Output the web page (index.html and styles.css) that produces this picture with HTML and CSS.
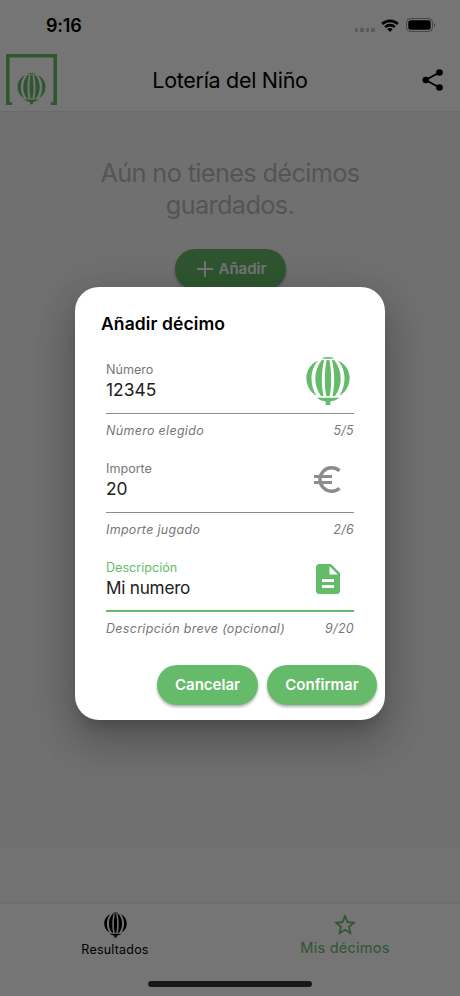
FILE: index.html
```html
<!DOCTYPE html>
<html lang="es">
<head>
<meta charset="utf-8">
<meta name="viewport" content="width=device-width, initial-scale=1">
<title>Lotería del Niño</title>
<link rel="stylesheet" href="styles.css">
</head>
<body>
<svg class="defs" width="0" height="0" aria-hidden="true">
  <symbol id="balloon" viewBox="0 0 44 50">
    <path d="M16 1.9Q22 .1 28 1.9L27 2.7H17ZM20.600 4H23.400C25.700 15 25.700 30 23.700 40H20.300C18.300 30 18.300 15 20.600 4ZM15.600 4.300L18.200 4C15.200 15 15.200 30 17.500 40H15C7.300 30 7.300 15 15.600 4.300ZM28.400 4.300L25.800 4C28.800 15 28.800 30 26.500 40H29C36.700 30 36.700 15 28.400 4.300ZM12 4.400C3.600 14 3.600 29 10.400 39.600L8.500 38.600C-2.600 30-3.200 11.500 12 4.400ZM32 4.400C40.400 14 40.400 29 33.600 39.600L35.500 38.600C46.600 30 47.200 11.500 32 4.400ZM10.300 41.700H33.700C30 44.200 27 45 24.300 45.400V49H19.700V45.400C17 45 14 44.200 10.300 41.700Z"/>
  </symbol>
</svg>
<div class="phone">
  <div class="app">
    <header class="top">
      <div class="status">
        <span class="clock">9:16</span>
        <div class="signals">
          <span class="dots"><i></i><i></i><i></i><i></i></span>
          <svg class="wifi" viewBox="0 0 18 14"><path d="M9 14L6.300 11.300A3.900 3.900 0 0 1 11.700 11.300ZM5 10L3.200 8.200A8.300 8.300 0 0 1 14.800 8.200L13 10A5.800 5.800 0 0 0 5 10ZM2 7L.2 5.100A12.600 12.600 0 0 1 17.800 5.100L16 7A10 10 0 0 0 2 7Z"/></svg>
          <svg class="battery" viewBox="0 0 30 14"><rect x=".5" y=".5" width="26" height="13" rx="4" fill="none" stroke="#000" stroke-opacity=".4"/><rect x="2.300" y="2.300" width="22.400" height="9.400" rx="2.300"/><path d="M28 5V9C29.700 8.300 29.700 5.700 28 5Z" fill-opacity=".45"/></svg>
        </div>
      </div>
      <div class="bar">
        <svg class="logo" viewBox="0 0 50 50"><path d="M0 0H50V50H44V47.300H46.500V3.500H3.500V47.300H6V50H0Z"/><use href="#balloon" x="11" y="18" width="28" height="32"/></svg>
        <h1>Lotería del Niño</h1>
        <svg class="share" viewBox="0 0 22 22"><path d="M17.500 3.500L3.500 11L17.500 18.500" fill="none" stroke="#000" stroke-width="1.900"/><circle cx="17.500" cy="3.500" r="3.300"/><circle cx="3.800" cy="11" r="3.300"/><circle cx="17.500" cy="18.500" r="3.300"/></svg>
      </div>
    </header>
    <main class="content">
      <p class="empty"><span>Aún no tienes décimos</span><br><span>guardados.</span></p>
      <button class="pill add"><svg viewBox="0 0 16 16"><path d="M8 0V16M0 8H16"/></svg><span>Añadir</span></button>
    </main>
    <div class="spacer"></div>
    <nav class="tabs">
      <div class="tab results"><svg viewBox="0 0 44 50"><use href="#balloon"/></svg><span>Resultados</span></div>
      <div class="tab mine"><svg viewBox="0 0 20 19"><path d="M20 7.240L12.810 6.620L10 0L7.190 6.630L0 7.240L5.460 11.970L3.820 19L10 15.270L16.180 19L14.550 11.970ZM10 13.400L6.240 15.670L7.240 11.390L3.920 8.510L8.300 8.130L10 4.100L11.710 8.140L16.090 8.520L12.770 11.400L13.770 15.680Z"/></svg><span>Mis décimos</span></div>
    </nav>
    <div class="home"><i></i></div>
  </div>
  <div class="scrim">
    <section class="dialog">
      <h2>Añadir décimo</h2>
      <div class="field">
        <div class="row">
          <div class="text"><span class="label">Número</span><span class="value">12345</span></div>
          <svg class="ic-balloon" viewBox="0 0 44 50"><use href="#balloon"/></svg>
        </div>
        <div class="hint"><span>Número elegido</span><span>5/5</span></div>
      </div>
      <div class="field">
        <div class="row">
          <div class="text"><span class="label">Importe</span><span class="value">20</span></div>
          <svg class="ic-euro" viewBox="0 0 27 27"><path d="M25.500 4.800A11.700 11.700 0 1 0 25.500 22.200" fill="none" stroke="#8c8c8c" stroke-width="3.400"/><path d="M0 8.900H18V12H0ZM0 14.900H18V18H0Z"/></svg>
        </div>
        <div class="hint"><span>Importe jugado</span><span>2/6</span></div>
      </div>
      <div class="field active">
        <div class="row">
          <div class="text"><span class="label">Descripción</span><span class="value words">Mi numero</span></div>
          <svg class="ic-doc" viewBox="4 2 16 20"><path d="M14 2H6c-1.100 0-2 .9-2 2v16c0 1.100.9 2 2 2h12c1.100 0 2-.9 2-2V8l-6-6zm2 16H8v-2h8v2zm0-4H8v-2h8v2zm-3-5V3.500L18.500 9H13z"/></svg>
        </div>
        <div class="hint"><span>Descripción breve (opcional)</span><span>9/20</span></div>
      </div>
      <div class="actions">
        <button class="pill cancel"><span>Cancelar</span></button>
        <button class="pill confirm"><span>Confirmar</span></button>
      </div>
    </section>
  </div>
</div>
</body>
</html>
```
FILE: styles.css
```css
* { box-sizing: border-box; }
body, h1, h2, p { margin: 0; }
body { font-family: Inter, "Liberation Sans", sans-serif; color: #000; }
span { white-space: nowrap; }
svg { display: block; flex: none; }
button { border: 0; font: inherit; padding: 0; }
.defs { position: absolute; }
.phone { position: relative; width: 460px; height: 996px; overflow: hidden; }
.app { display: flex; flex-direction: column; height: 100%; background: #fafafa; }
.top { height: 112px; background: #fff; border-bottom: 1px solid #e4e4e4; }
.status { display: flex; justify-content: space-between; height: 51px; padding: 15px 24px 0 46px; }
.clock { font-size: 18px; line-height: 22px; font-weight: 600; letter-spacing: -.2px; }
.signals { display: flex; align-items: flex-start; padding-top: 3px; }
.dots { display: flex; gap: 2px; margin: 10px 6px 0 0; }
.dots i { width: 3.600px; height: 4px; background: #c4c4c4; border-radius: 1px; }
.wifi { width: 18px; height: 14px; margin-right: 7px; }
.battery { width: 30px; height: 14px; }
.bar { display: grid; grid-template-columns: 51px 1fr 22px; align-items: center; height: 59px; padding: 0 16px 2px 6px; }
.logo { width: 51px; height: 51px; fill: #66bb6a; }
h1 { font-size: 21.500px; font-weight: 400; letter-spacing: -.3px; white-space: nowrap; text-align: center; padding-right: 19px; }
.share { width: 22px; height: 22px; }
.content { height: 736px; padding-top: 45px; display: flex; flex-direction: column; align-items: center; background: #f5f5f5; }
.empty { font-size: 25.300px; line-height: 32px; color: #b8b8b8; text-align: center; letter-spacing: -.64px; }
.pill { display: flex; align-items: center; justify-content: center; height: 40px; border-radius: 20px; background: #66bb6a; color: #fff; font-size: 15px; line-height: 18px; font-weight: 600; box-shadow: 0 2px 3px rgba(0,0,0,.3); }
.add { width: 111px; margin-top: 28px; gap: 6px; padding: 0 0 0 3px; }
.add svg { width: 16px; height: 16px; stroke: #fff; stroke-width: 2; }
.spacer { height: 54px; }
.tabs { display: grid; grid-template-columns: 1fr 1fr; height: 60px; background: #fff; border-top: 2px solid #f0f0f0; }
.tab { display: flex; flex-direction: column; align-items: center; }
.results { font-size: 12.500px; line-height: 16px; padding-top: 8px; letter-spacing: .2px; }
.results svg { width: 23px; height: 26px; margin-bottom: 4px; }
.mine { color: #66bb6a; font-size: 14.600px; line-height: 18px; padding-top: 10px; letter-spacing: .2px; }
.mine svg { width: 22px; height: 21px; fill: #66bb6a; margin-bottom: 4px; }
.home { flex: 1; display: flex; justify-content: center; background: #fff; padding-top: 19px; }
.home i { width: 164px; height: 6px; border-radius: 3px; background: #333; }
.scrim { position: absolute; inset: 0; background: rgba(0,0,0,.54); padding: 287px 75px 0; }
.dialog { width: 310px; height: 433px; border-radius: 24px; background: #fff; padding: 26px 8px 0 31px; box-shadow: 0 11px 15px -7px rgba(0,0,0,.2), 0 24px 38px 3px rgba(0,0,0,.14), 0 9px 46px 8px rgba(0,0,0,.12); }
h2 { font-size: 17.500px; line-height: 21px; font-weight: 600; letter-spacing: .1px; margin: 0 0 23px -5px; white-space: nowrap; }
.field { width: 248px; height: 99px; }
.row { display: flex; justify-content: space-between; height: 57px; border-bottom: 1px solid #8c8c8c; }
.text { display: flex; flex-direction: column; padding-top: 4px; }
.label { font-size: 12.600px; line-height: 17px; color: #777; }
.value { font-size: 17.400px; line-height: 23px; color: #212121; }
.words { font-size: 17.200px; letter-spacing: -.25px; }
.hint { display: flex; justify-content: space-between; padding-top: 9px; font-size: 12.500px; line-height: 16px; font-style: italic; color: #777; letter-spacing: .3px; }
.ic-balloon { width: 44px; height: 50px; fill: #66bb6a; margin: -1px 4px 0 0; }
.ic-euro { width: 27px; height: 27px; fill: #8c8c8c; margin: 10px 13px 0 0; }
.ic-doc { width: 24px; height: 30px; fill: #66bb6a; margin: 9px 14px 0 0; }
.active .row { border-bottom: 2px solid #66bb6a; }
.active .label { color: #66bb6a; }
.actions { display: flex; justify-content: flex-end; gap: 9px; margin-top: 11px; }
.cancel { width: 101px; }
.confirm { width: 110px; }
```
